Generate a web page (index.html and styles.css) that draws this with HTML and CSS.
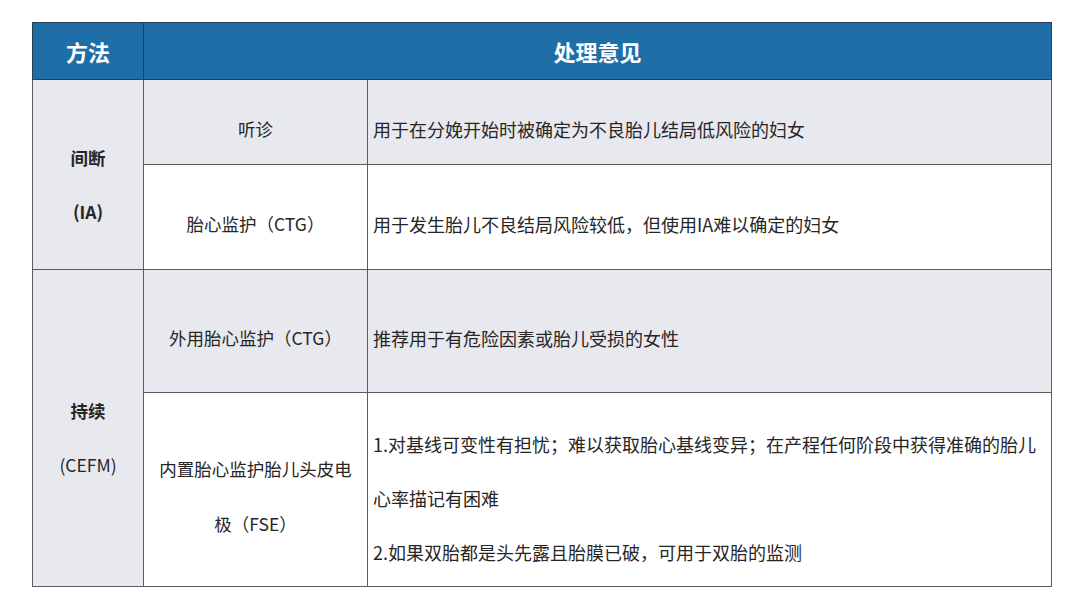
FILE: index.html
```html
<!DOCTYPE html>
<html lang="zh-CN">
<head>
<meta charset="utf-8">
<title>胎心监护方法</title>
<link rel="stylesheet" href="styles.css">
</head>
<body>
<table class="grid">
  <colgroup>
    <col class="c-method">
    <col class="c-type">
    <col class="c-note">
  </colgroup>
  <thead>
    <tr class="r-head">
      <th class="h-method">方法</th>
      <th class="h-note" colspan="2">处理意见</th>
    </tr>
  </thead>
  <tbody>
    <tr class="r1 shade">
      <td class="method" rowspan="2"><span class="b">间断</span><br><span class="b">(IA)</span></td>
      <td class="type">听诊</td>
      <td class="note">用于在分娩开始时被确定为不良胎儿结局低风险的妇女</td>
    </tr>
    <tr class="r2">
      <td class="type">胎心监护（CTG）</td>
      <td class="note">用于发生胎儿不良结局风险较低，但使用IA难以确定的妇女</td>
    </tr>
    <tr class="r3 shade">
      <td class="method" rowspan="2"><span class="b">持续</span><br>(CEFM)</td>
      <td class="type">外用胎心监护（CTG）</td>
      <td class="note">推荐用于有危险因素或胎儿受损的女性</td>
    </tr>
    <tr class="r4">
      <td class="type multi">内置胎心监护胎儿头皮电<br>极（FSE）</td>
      <td class="note multi3">1.对基线可变性有担忧；难以获取胎心基线变异；在产程任何阶段中获得准确的胎儿<br>心率描记有困难<br>2.如果双胎都是头先露且胎膜已破，可用于双胎的监测</td>
    </tr>
  </tbody>
</table>
</body>
</html>
```
FILE: styles.css
```css
html, body {
  margin: 0;
  padding: 0;
  background: #ffffff;
}

body {
  font-family: "Noto Sans CJK SC", "Noto Sans", sans-serif;
  color: #262626;
}

.grid {
  margin: 22px 0 0 32px;
  border-collapse: collapse;
  table-layout: fixed;
  width: 1019px;
}

.c-method { width: 111px; }
.c-type { width: 224px; }
.c-note { width: 684px; }

.grid th,
.grid td {
  border: 1px solid #5c5c5c;
  padding: 0;
  vertical-align: middle;
}

.r-head { height: 57px; }
.r1 { height: 85px; }
.r2 { height: 105px; }
.r3 { height: 123px; }
.r4 { height: 194px; }

.r-head th {
  background: #1f6ea8;
  color: #ffffff;
  font-size: 22px;
  font-weight: 700;
  text-align: center;
  border-color: #2a3f55;
}

.shade td { background: #e8e9ee; }
.grid td.method { background: #e8e9ee; }

.method {
  text-align: center;
  font-size: 17.5px;
  line-height: 54px;
  padding-top: 20px !important;
}

.b { font-weight: 700; }

.type {
  text-align: center;
  font-size: 17.5px;
  line-height: 26px;
  padding-top: 13px !important;
}

.type.multi {
  line-height: 55px;
}

.note {
  text-align: left;
  font-size: 18px;
  line-height: 26px;
  padding: 13px 4px 0 5px !important;
}

.note.multi3 {
  line-height: 54px;
  padding-top: 16px !important;
}
```
